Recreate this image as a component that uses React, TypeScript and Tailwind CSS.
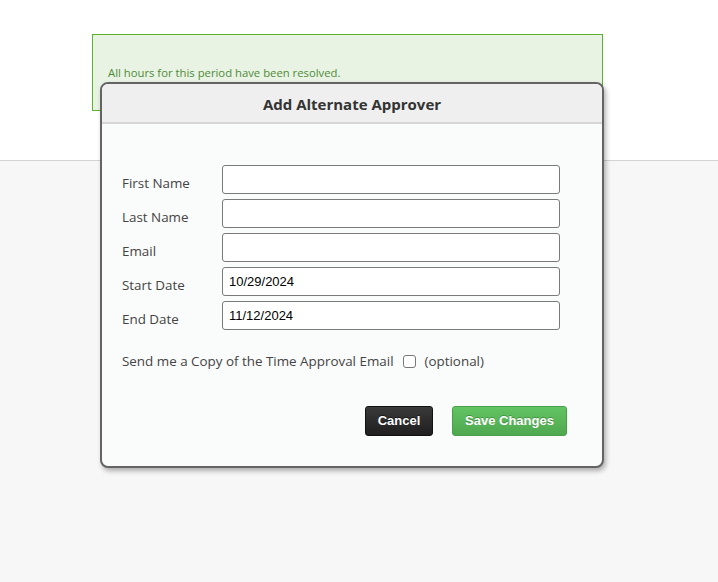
import { useState } from "react";

const fields = [
  { label: "First Name", value: "" },
  { label: "Last Name", value: "" },
  { label: "Email", value: "" },
  { label: "Start Date", value: "10/29/2024" },
  { label: "End Date", value: "11/12/2024" },
];

const App = () => {
  const [copy, setCopy] = useState(false);

  return (
    <div className="relative min-h-[582px] bg-[#f7f7f7] font-['Open_Sans',sans-serif]">
      <div className="h-[161px] bg-white border-b border-[#d3d3d3] pt-[34px] pl-[92px]">
        <div className="w-[511px] h-[77px] bg-[#e8f3e3] border border-[#5cb130] pt-[30px] pl-[15px] text-[11.3px] text-[#4f8a3b]">
          All hours for this period have been resolved.
        </div>
      </div>

      {/* dialog */}
      <div className="absolute left-[100px] top-[82px] w-[504px] h-[386px] rounded-[8px] border-2 border-[#646464] bg-[#fafbfb] shadow-[2px_3px_5px_rgba(0,0,0,0.3)] overflow-hidden">
        <div className="h-[40px] pt-[3px] bg-[#efefef] border-b-2 border-[#d6d6d6] flex items-center justify-center">
          <h2 className="text-[15px] font-bold text-[#333]">Add Alternate Approver</h2>
        </div>

        <div className="pt-[41px] pl-[20px] pr-[42px]">
          <div className="flex flex-col gap-[5px]">
            {fields.map((f) => (
              <div key={f.label} className="flex items-center h-[29px]">
                <label className="w-[100px] pt-[7px] text-[13.4px] text-[#444]">{f.label}</label>
                <input
                  type="text"
                  defaultValue={f.value}
                  className="w-[338px] h-[29px] border border-[#7a7a7a] rounded-[3px] bg-white px-[6px] text-[13px] text-black font-['Liberation_Sans',sans-serif] focus:outline-none"
                />
              </div>
            ))}
          </div>

          <div className="flex items-center mt-[21px] text-[13.4px] text-[#444]">
            <span>Send me a Copy of the Time Approval Email</span>
            <input
              type="checkbox"
              checked={copy}
              onChange={() => setCopy(!copy)}
              className="ml-[9px] mr-[9px] w-[13px] h-[13px] appearance-none border border-[#777] rounded-[3px] bg-white"
            />
            <span>(optional)</span>
          </div>

          <div className="flex justify-end gap-[19px] mt-[35px] mr-[-7px]">
            <button className="w-[68px] h-[30px] rounded-[3px] bg-gradient-to-b from-[#3a3a3a] to-[#1f1f1f] border border-[#111] text-white text-[13px] font-bold font-['Liberation_Sans',sans-serif] [text-shadow:0_-1px_0_rgba(0,0,0,0.5)]">
              Cancel
            </button>
            <button className="w-[115px] h-[30px] rounded-[3px] bg-gradient-to-b from-[#62c462] to-[#4fa84f] border border-[#4a9e4a] text-white text-[13px] font-bold font-['Liberation_Sans',sans-serif] [text-shadow:0_-1px_0_rgba(0,0,0,0.25)]">
              Save Changes
            </button>
          </div>
        </div>
      </div>
    </div>
  );
};

export default App;
